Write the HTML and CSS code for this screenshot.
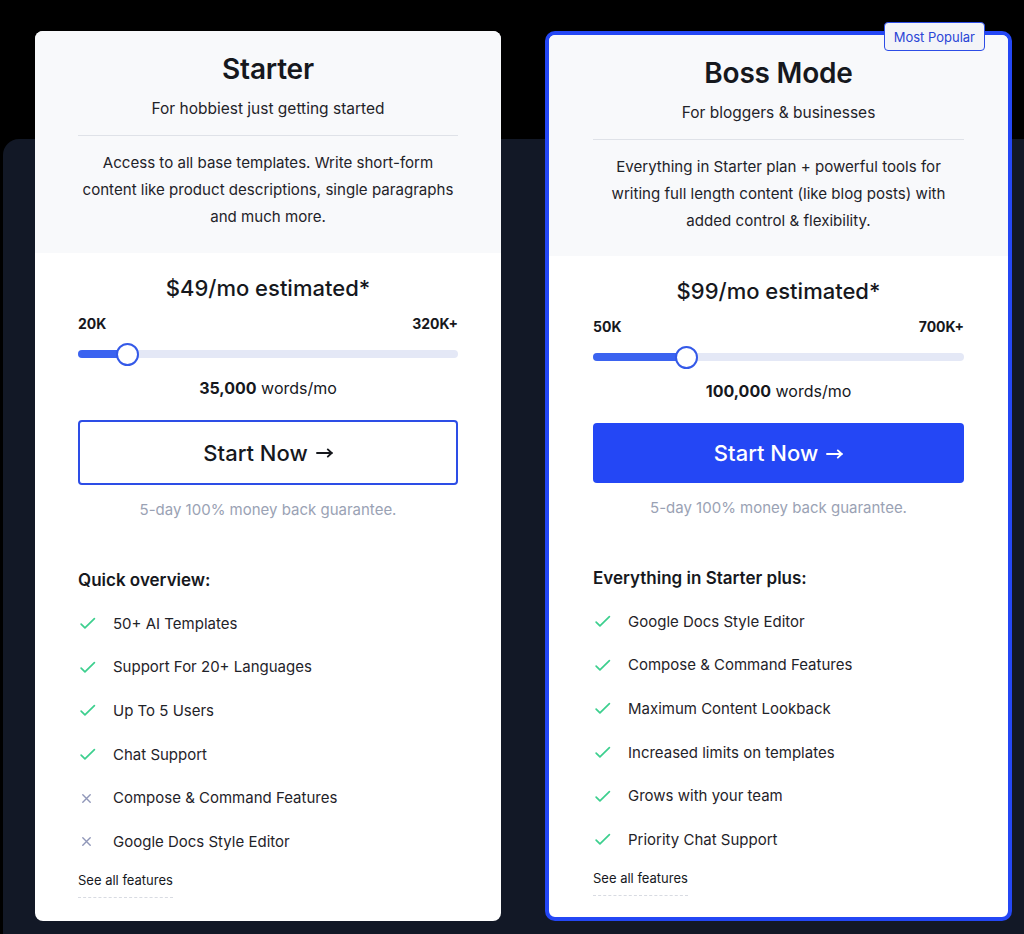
FILE: index.html
```html
<!DOCTYPE html>
<html lang="en">
<head>
<meta charset="utf-8">
<title>Pricing</title>
<link rel="stylesheet" href="styles.css">
</head>
<body>
<div class="page">
  <div class="cards">
    <section class="card">
      <div class="card-top">
        <h2 class="plan-name">Starter</h2>
        <p class="plan-tag">For hobbiest just getting started</p>
        <hr class="divider">
        <p class="plan-desc">Access to all base templates. Write short-form content like product descriptions, single paragraphs and much more.</p>
      </div>
      <div class="card-body">
        <div class="price">$49/mo estimated*</div>
        <div class="range-labels"><span>20K</span><span>320K+</span></div>
        <div class="slider">
          <div class="slider-fill" style="width:49px"></div>
          <div class="slider-thumb" style="left:49px"></div>
        </div>
        <div class="words"><b>35,000</b> words/mo</div>
        <button class="btn btn-outline">Start Now<svg class="arrow" viewBox="0 0 17 10" aria-hidden="true"><path d="M1 5h15M11.8 1.4L15.6 5 11.8 8.6"/></svg></button>
        <p class="guarantee">5-day 100% money back guarantee.</p>
        <h3 class="features-title">Quick overview:</h3>
        <ul class="features">
          <li><span class="ico"><svg class="check" viewBox="0 0 16 16"><path d="M2 8.6l3.6 3.6L14.5 3.4"/></svg></span>50+ AI Templates</li>
          <li><span class="ico"><svg class="check" viewBox="0 0 16 16"><path d="M2 8.6l3.6 3.6L14.5 3.4"/></svg></span>Support For 20+ Languages</li>
          <li><span class="ico"><svg class="check" viewBox="0 0 16 16"><path d="M2 8.6l3.6 3.6L14.5 3.4"/></svg></span>Up To 5 Users</li>
          <li><span class="ico"><svg class="check" viewBox="0 0 16 16"><path d="M2 8.6l3.6 3.6L14.5 3.4"/></svg></span>Chat Support</li>
          <li><span class="ico"><svg class="cross" viewBox="0 0 16 16"><path d="M4.5 4.5l7 7M11.5 4.5l-7 7"/></svg></span>Compose &amp; Command Features</li>
          <li><span class="ico"><svg class="cross" viewBox="0 0 16 16"><path d="M4.5 4.5l7 7M11.5 4.5l-7 7"/></svg></span>Google Docs Style Editor</li>
        </ul>
        <a class="see-all" href="#">See all features</a>
      </div>
    </section>

    <section class="card card-featured">
      <span class="badge">Most Popular</span>
      <div class="card-top">
        <h2 class="plan-name">Boss Mode</h2>
        <p class="plan-tag">For bloggers &amp; businesses</p>
        <hr class="divider">
        <p class="plan-desc">Everything in Starter plan + powerful tools for writing full length content (like blog posts) with added control &amp; flexibility.</p>
      </div>
      <div class="card-body">
        <div class="price">$99/mo estimated*</div>
        <div class="range-labels"><span>50K</span><span>700K+</span></div>
        <div class="slider">
          <div class="slider-fill" style="width:93px"></div>
          <div class="slider-thumb" style="left:93px"></div>
        </div>
        <div class="words"><b>100,000</b> words/mo</div>
        <button class="btn btn-solid">Start Now<svg class="arrow" viewBox="0 0 17 10" aria-hidden="true"><path d="M1 5h15M11.8 1.4L15.6 5 11.8 8.6"/></svg></button>
        <p class="guarantee">5-day 100% money back guarantee.</p>
        <h3 class="features-title">Everything in Starter plus:</h3>
        <ul class="features">
          <li><span class="ico"><svg class="check" viewBox="0 0 16 16"><path d="M2 8.6l3.6 3.6L14.5 3.4"/></svg></span>Google Docs Style Editor</li>
          <li><span class="ico"><svg class="check" viewBox="0 0 16 16"><path d="M2 8.6l3.6 3.6L14.5 3.4"/></svg></span>Compose &amp; Command Features</li>
          <li><span class="ico"><svg class="check" viewBox="0 0 16 16"><path d="M2 8.6l3.6 3.6L14.5 3.4"/></svg></span>Maximum Content Lookback</li>
          <li><span class="ico"><svg class="check" viewBox="0 0 16 16"><path d="M2 8.6l3.6 3.6L14.5 3.4"/></svg></span>Increased limits on templates</li>
          <li><span class="ico"><svg class="check" viewBox="0 0 16 16"><path d="M2 8.6l3.6 3.6L14.5 3.4"/></svg></span>Grows with your team</li>
          <li><span class="ico"><svg class="check" viewBox="0 0 16 16"><path d="M2 8.6l3.6 3.6L14.5 3.4"/></svg></span>Priority Chat Support</li>
        </ul>
        <a class="see-all" href="#">See all features</a>
      </div>
    </section>
  </div>
</div>
</body>
</html>
```

FILE: styles.css
```css
* { box-sizing: border-box; }

html, body {
  margin: 0;
  padding: 0;
  background: #000;
  font-family: "Inter", "Noto Sans", "Liberation Sans", sans-serif;
  color: #1f2329;
  overflow: hidden;
}

.page {
  position: relative;
  width: 1024px;
  height: 934px;
  overflow: hidden;
}

.page::before {
  content: "";
  position: absolute;
  left: 3px;
  top: 139px;
  right: -40px;
  bottom: -40px;
  background: #121826;
  border-radius: 16px;
}

.cards {
  position: relative;
  display: flex;
  gap: 44px;
  padding: 31px 0 0 35px;
  align-items: flex-start;
}

.card {
  position: relative;
  width: 466px;
  height: 890px;
  background: #fff;
  border-radius: 8px;
  display: flex;
  flex-direction: column;
}

.card-featured {
  width: 467px;
  border: 4px solid #2447f5;
  border-radius: 10px;
}

.card-top {
  background: #f8f9fb;
  border-radius: 8px 8px 0 0;
  padding: 20px 43px 23px;
  text-align: center;
}

.card-featured .card-top {
  border-radius: 6px 6px 0 0;
  padding: 20px 44px 22px;
}

.plan-name {
  margin: 0;
  font-size: 28px;
  line-height: 36px;
  font-weight: 600;
  color: #16181d;
  letter-spacing: -0.2px;
}

.plan-tag {
  margin: 10px 0 0;
  font-size: 15.5px;
  line-height: 24px;
  color: #1f2329;
}

.divider {
  border: 0;
  border-top: 1px solid #dfe2e8;
  margin: 14px 0 0;
  height: 0;
}

.plan-desc {
  margin: 13px 0 0;
  font-size: 15.1px;
  line-height: 27px;
  color: #1f2329;
}

.card-body {
  padding: 20px 43px 0;
  display: flex;
  flex-direction: column;
}

.card-featured .card-body {
  padding: 20px 44px 0;
}

.price {
  text-align: center;
  font-size: 22px;
  line-height: 30px;
  font-weight: 500;
  color: #16181d;
}

.range-labels {
  margin-top: 11px;
  display: flex;
  justify-content: space-between;
  font-size: 14px;
  line-height: 20px;
  font-weight: 700;
  color: #16181d;
}

.slider {
  position: relative;
  margin-top: 16px;
  height: 8px;
  border-radius: 4px;
  background: #e4e8f6;
}

.slider-fill {
  position: absolute;
  left: 0;
  top: 0;
  bottom: 0;
  background: #3b63f0;
  border-radius: 4px;
}

.slider-thumb {
  position: absolute;
  top: 50%;
  width: 23px;
  height: 23px;
  margin: -11.5px 0 0 -11.5px;
  background: #fff;
  border: 2px solid #3459e8;
  border-radius: 50%;
}

.words {
  margin-top: 18px;
  text-align: center;
  font-size: 16px;
  line-height: 24px;
  color: #16181d;
}

.words b { font-weight: 700; }

.btn {
  margin-top: 20px;
  width: 100%;
  display: flex;
  align-items: center;
  justify-content: center;
  gap: 8px;
  font-family: inherit;
  font-size: 22px;
  font-weight: 500;
  border-radius: 4px;
  cursor: pointer;
}

.arrow {
  width: 17px;
  height: 10px;
  margin-top: 1px;
  fill: none;
  stroke: currentColor;
  stroke-width: 1.9;
  stroke-linecap: round;
  stroke-linejoin: round;
}

.btn-outline {
  height: 65px;
  background: #fff;
  color: #16181d;
  border: 2px solid #2d4de6;
}

.btn-solid {
  height: 60px;
  background: #2447f5;
  color: #fff;
  border: 0;
}

.guarantee {
  margin: 14px 0 0;
  text-align: center;
  font-size: 15px;
  line-height: 22px;
  color: #9aa2b4;
}

.features-title {
  margin: 47px 0 0;
  font-size: 17px;
  line-height: 24px;
  font-weight: 600;
  color: #16181d;
}

.features {
  list-style: none;
  margin: 10px 0 0;
  padding: 0;
}

.features li {
  display: flex;
  align-items: center;
  height: 43.6px;
  font-size: 15px;
  line-height: 24px;
  color: #1f2329;
}

.ico {
  width: 35px;
  flex: none;
  display: flex;
  align-items: center;
}

.ico svg {
  width: 17px;
  height: 17px;
  fill: none;
  stroke-linecap: round;
  stroke-linejoin: round;
}

.check { stroke: #3ccf8e; stroke-width: 1.6; margin-left: 1px; }
.cross { stroke: #8f96b8; stroke-width: 1.3; }

.see-all {
  align-self: flex-start;
  margin-top: 7px;
  padding-bottom: 8px;
  font-size: 13px;
  line-height: 18px;
  color: #16181d;
  text-decoration: none;
  border-bottom: 1px dashed #d8dbe2;
}

.badge {
  position: absolute;
  top: -13px;
  right: 23px;
  height: 29px;
  padding: 0 9px;
  display: flex;
  align-items: center;
  background: #f3f4f8;
  border: 1px solid #2d4de6;
  border-radius: 4px;
  font-size: 13px;
  color: #2a45d6;
  z-index: 2;
}
```
